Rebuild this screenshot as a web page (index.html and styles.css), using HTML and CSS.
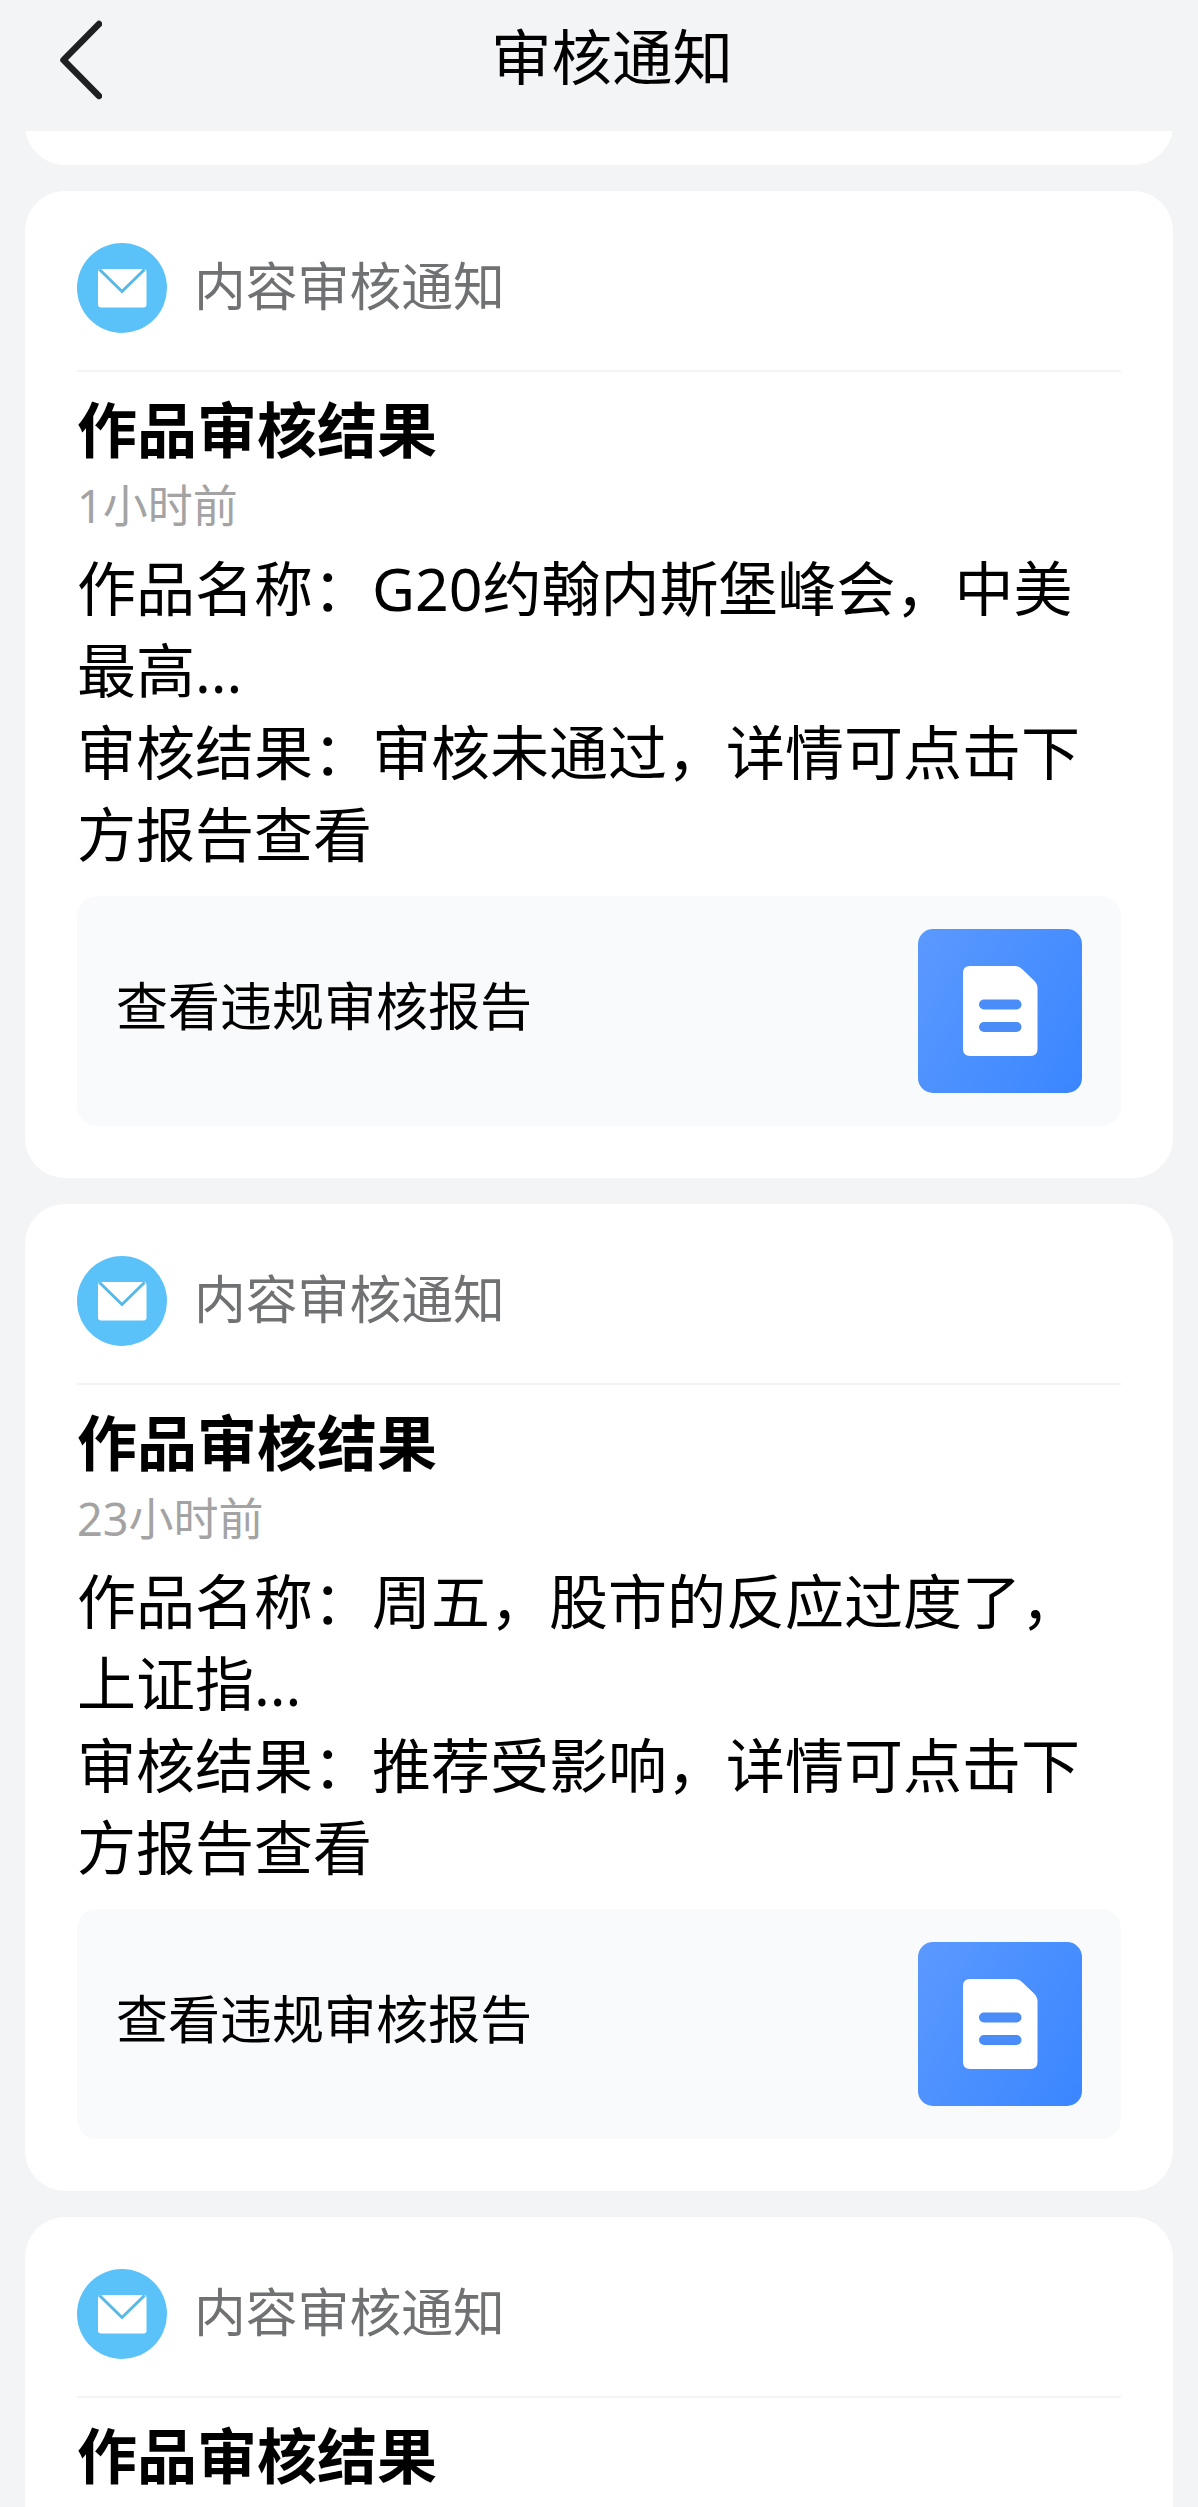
FILE: index.html
```html
<!DOCTYPE html>
<html lang="zh-CN">
<head>
  <meta charset="UTF-8" />
  <meta name="viewport" content="width=device-width, initial-scale=1" />
  <title>审核通知</title>
  <link rel="stylesheet" href="styles.css">
</head>
<body>

  <!-- 图标 -->
  <svg class="sprite">
    <symbol id="mail" viewBox="0 0 90 90">
      <circle cx="45" cy="45" r="45" fill="#5ac2f8" />
      <rect x="21" y="26" width="48.500" height="38.500" rx="3" fill="#fff" />
      <path d="M22.500 26.500L45 48.500L67.500 26.500" fill="none" stroke="#58b8e6" stroke-width="3" />
    </symbol>
    <symbol id="report" viewBox="0 0 164 164">
      <path d="M52 37H97Q101 37 104 40L116 51.500Q119.500 55 119.500 59V120Q119.500 127 112.500 127H52Q45 127 45 120V44Q45 37 52 37Z" fill="#fff" />
      <path d="M66 75.500H98.500M66 98H98.500" stroke="#4a8cf8" stroke-width="10" stroke-linecap="round" />
    </symbol>
  </svg>

  <header class="navbar">
    <a class="back" href="#" aria-label="返回">
      <svg width="44" height="80" viewBox="0 0 44 80" fill="none" stroke="#1f2022" stroke-width="6.500" stroke-linecap="round" stroke-linejoin="round">
        <path d="M41 4L5.500 40L41 76" />
      </svg>
    </a>
    <h1>审核通知</h1>
  </header>

  <main class="list">
    <div class="card card-tail"></div>

    <section class="card">
      <div class="card-head">
        <svg class="avatar"><use href="#mail" /></svg>
        <span>内容审核通知</span>
      </div>
      <h2>作品审核结果</h2>
      <time>1小时前</time>
      <p>作品名称：G20约翰内斯堡峰会，中美最高...</p>
      <p>审核结果：审核未通过，详情可点击下方报告查看</p>
      <a class="report" href="#">
        <span>查看违规审核报告</span>
        <svg class="report-icon"><use href="#report" /></svg>
      </a>
    </section>

    <section class="card">
      <div class="card-head">
        <svg class="avatar"><use href="#mail" /></svg>
        <span>内容审核通知</span>
      </div>
      <h2>作品审核结果</h2>
      <time>23小时前</time>
      <p>作品名称：周五，股市的反应过度了，上证指...</p>
      <p>审核结果：推荐受影响，详情可点击下方报告查看</p>
      <a class="report" href="#">
        <span>查看违规审核报告</span>
        <svg class="report-icon"><use href="#report" /></svg>
      </a>
    </section>

    <section class="card card-last">
      <div class="card-head">
        <svg class="avatar"><use href="#mail" /></svg>
        <span>内容审核通知</span>
      </div>
      <h2>作品审核结果</h2>
    </section>
  </main>

</body>
</html>
```
FILE: styles.css
```css
* {
  box-sizing: border-box;
}

html, body {
  margin: 0;
  height: 2507px;
  overflow: hidden;
}

body {
  display: flex;
  flex-direction: column;
  background: #f3f4f6;
  color: #000;
  font-family: "Noto Sans", "Noto Sans CJK SC", sans-serif;
}

h1, h2, p {
  margin: 0;
}

a {
  color: inherit;
  text-decoration: none;
}

.sprite {
  display: none;
}

/* 顶部导航 */
.navbar {
  flex: none;
  display: flex;
  align-items: center;
  height: 131px;
  padding: 0 58px 11px;
}

.back {
  display: flex;
  width: 44px;
}

.navbar h1 {
  flex: 1;
  padding: 0 18px 6px 0;
  font-size: 60.5px;
  font-weight: 400;
  line-height: 84px;
  text-align: center;
}

/* 通知列表 */
.list {
  flex: 1;
  min-height: 0;
  display: flex;
  flex-direction: column;
  gap: 26px;
  padding: 0 25px;
  overflow: hidden;
}

.card {
  flex: none;
  height: 987px;
  padding: 52px;
  background: #fff;
  border-radius: 40px;
}

/* 上一条通知的底部 */
.card-tail {
  height: 80px;
  margin-top: -46px;
  padding: 0;
}

.card-last {
  height: 400px;
}

.card-head {
  display: flex;
  align-items: flex-start;
  gap: 27px;
  height: 129px;
  border-bottom: 2px solid #f3f4f5;
  color: #707173;
  font-size: 51.8px;
  line-height: 86px;
}

.avatar {
  width: 90px;
  height: 90px;
}

.card h2 {
  margin-top: 17px;
  font-size: 60px;
  font-weight: 700;
  line-height: 82px;
}

.card time {
  display: block;
  height: 76px;
  color: #a3a3a4;
  font-size: 45px;
  line-height: 70px;
}

.card p {
  width: 1010px;
  font-size: 59px;
  line-height: 82px;
}

/* 报告入口 */
.report {
  display: flex;
  align-items: center;
  justify-content: space-between;
  height: 230px;
  margin-top: 21px;
  padding: 0 39px;
  background: #f9fafc;
  border-radius: 20px;
  font-size: 52px;
}

.report span {
  padding-bottom: 16px;
}

.report-icon {
  width: 164px;
  height: 164px;
  border-radius: 15px;
  background: linear-gradient(120deg, #5b99ff, #3a86ff);
}
```
